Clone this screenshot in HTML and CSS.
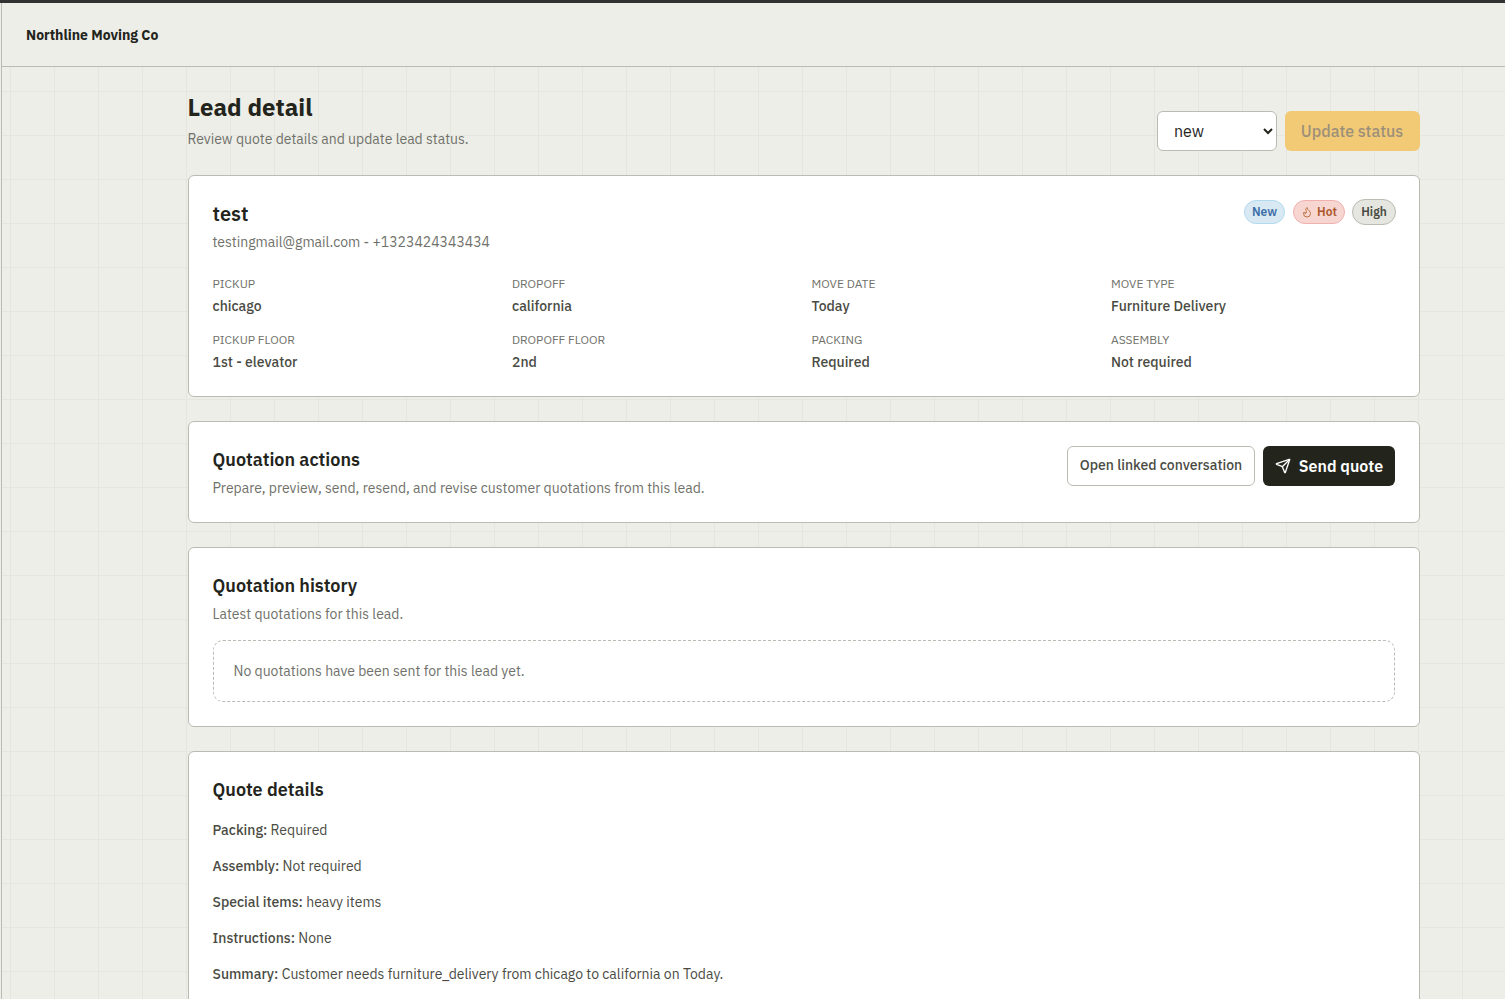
FILE: index.html
```
<!DOCTYPE html>
<html lang="en">
<head>
  <meta charset="UTF-8" />
  <meta name="viewport" content="width=device-width, initial-scale=1" />
  <title>Lead detail – Northline Moving Co</title>
  <link rel="stylesheet" href="styles.css">
</head>
<body>

  <div class="app">
    <header class="topbar">
      <span class="company">Northline Moving Co</span>
    </header>

    <main class="content">

      <div class="page-head">
        <div>
          <h1>Lead detail</h1>
          <p class="muted page-sub">Review quote details and update lead status.</p>
        </div>
        <form class="status-form">
          <select class="status-select" aria-label="Lead status">
            <option>new</option>
            <option>contacted</option>
            <option>quoted</option>
          </select>
          <button type="button" class="btn btn-update" disabled>Update status</button>
        </form>
      </div>

      <!-- lead summary -->
      <section class="card">
        <div class="card-head">
          <div>
            <h2 class="lead-name">test</h2>
            <p class="muted">testingmail@gmail.com - +1323424343434</p>
          </div>
          <div class="badges">
            <span class="badge badge-new">New</span>
            <span class="badge badge-hot">
              <svg class="badge-icon" viewBox="0 0 24 24"><path d="M8.5 14.5A2.5 2.5 0 0 0 11 12c0-1.38-.5-2-1-3-1.072-2.143-.224-4.054 2-6 .5 2.5 2 4.9 4 6.5 2 1.6 3 3.5 3 5.5a7 7 0 1 1-14 0c0-1.153.433-2.294 1-3a2.5 2.5 0 0 0 2.5 2.5z"/></svg>
              Hot
            </span>
            <span class="badge badge-high">High</span>
          </div>
        </div>

        <dl class="facts">
          <div><dt>Pickup</dt><dd>chicago</dd></div>
          <div><dt>Dropoff</dt><dd>california</dd></div>
          <div><dt>Move date</dt><dd>Today</dd></div>
          <div><dt>Move type</dt><dd>Furniture Delivery</dd></div>
          <div><dt>Pickup floor</dt><dd>1st - elevator</dd></div>
          <div><dt>Dropoff floor</dt><dd>2nd</dd></div>
          <div><dt>Packing</dt><dd>Required</dd></div>
          <div><dt>Assembly</dt><dd>Not required</dd></div>
        </dl>
      </section>

      <section class="card">
        <div class="card-head">
          <div>
            <h2>Quotation actions</h2>
            <p class="muted">Prepare, preview, send, resend, and revise customer quotations from this lead.</p>
          </div>
          <div class="actions">
            <button type="button" class="btn btn-outline">Open linked conversation</button>
            <button type="button" class="btn btn-dark">
              <svg class="btn-icon" viewBox="0 0 24 24"><path d="M14.536 21.686a.5.5 0 0 0 .937-.024l6.5-19a.496.496 0 0 0-.635-.635l-19 6.5a.5.5 0 0 0-.024.937l7.93 3.18a2 2 0 0 1 1.112 1.11z"/><path d="m21.854 2.147-10.94 10.939"/></svg>
              Send quote
            </button>
          </div>
        </div>
      </section>

      <section class="card">
        <h2>Quotation history</h2>
        <p class="muted">Latest quotations for this lead.</p>
        <div class="empty muted">No quotations have been sent for this lead yet.</div>
      </section>

      <section class="card">
        <h2>Quote details</h2>
        <div class="details">
          <p><strong>Packing:</strong> Required</p>
          <p><strong>Assembly:</strong> Not required</p>
          <p><strong>Special items:</strong> heavy items</p>
          <p><strong>Instructions:</strong> None</p>
          <p><strong>Summary:</strong> Customer needs furniture_delivery from chicago to california on Today.</p>
        </div>
      </section>

    </main>
  </div>

</body>
</html>
```
FILE: styles.css
```
* {
  box-sizing: border-box;
}

html {
  height: 100%;
  overflow: hidden;
}

body {
  height: 100%;
  overflow: hidden;
  margin: 0;
  padding-left: 1px;
  border-top: 3px solid #323232;
  background-color: #edeee8;
  color: #4a4b43;
  font-family: "IBM Plex Sans", Roboto, sans-serif;
  font-size: 14px;
  line-height: 20px;
}

h1,
h2,
p,
dl,
dd {
  margin: 0;
}

h1 {
  color: #23241c;
  font-size: 24px;
  line-height: 32px;
  font-weight: 700;
}

h2 {
  color: #23241c;
  font-size: 18px;
  line-height: 28px;
  font-weight: 600;
}

.muted {
  color: #70716a;
}

.app {
  min-height: 100%;
  border-left: 1px solid #babbb2;
  background-image:
    linear-gradient(to right, #e5e6df 1px, transparent 1px),
    linear-gradient(to bottom, #e5e6df 1px, transparent 1px);
  background-size: 44px 44px;
  background-position: 8px 0;
}

.topbar {
  display: flex;
  align-items: center;
  height: 64px;
  padding: 0 24px;
  border-bottom: 1px solid #babbb2;
  background-color: #edeee8;
}

.company {
  color: #23241c;
  font-weight: 700;
}

.content {
  display: flex;
  flex-direction: column;
  gap: 24px;
  width: 1232px;
  margin-left: 185.5px;
  padding-top: 24px;
}

.page-head {
  display: flex;
  justify-content: space-between;
  align-items: flex-end;
}

.page-sub {
  margin-top: 4px;
  line-height: 24px;
}

.status-form {
  display: flex;
  gap: 8px;
}

.status-select {
  width: 120px;
  height: 40px;
  padding: 0 0 0 12.5px;
  border: 1px solid #babbb2;
  border-radius: 6px;
  background-color: #fff;
  color: #23241c;
  font-family: inherit;
  font-size: 16px;
}

.btn {
  display: flex;
  align-items: center;
  justify-content: center;
  height: 40px;
  padding: 0;
  border: 1px solid transparent;
  border-radius: 6px;
  font-family: inherit;
  font-size: 16px;
  font-weight: 500;
}

.btn-update {
  width: 135px;
  background-color: #f2c975;
  color: #9c907a;
}

.btn-outline {
  width: 188px;
  padding: 0 0 2px 1px;
  border-color: #babbb2;
  background-color: #fff;
  color: #4a4b43;
  font-size: 14px;
}

.btn-dark {
  gap: 8px;
  width: 132px;
  padding-left: 1px;
  background-color: #23241c;
  color: #fff;
  font-weight: 600;
}

.btn-icon {
  width: 16px;
  height: 16px;
  fill: none;
  stroke: currentColor;
  stroke-width: 2;
  stroke-linecap: round;
  stroke-linejoin: round;
}

.card {
  padding: 24px;
  border: 1px solid #babbb2;
  border-radius: 6px;
  background-color: #fff;
}

.card h2 + .muted {
  margin-top: 4px;
}

.card-head {
  display: flex;
  justify-content: space-between;
  align-items: flex-start;
}

.card .lead-name {
  font-size: 20px;
}

.badges {
  display: flex;
  align-items: center;
  height: 24px;
}

.badge {
  display: flex;
  align-items: center;
  justify-content: center;
  height: 24px;
  padding-left: 1px;
  border: 1px solid;
  border-radius: 13px;
  font-size: 12px;
  line-height: 16px;
  font-weight: 600;
}

.badge-new {
  width: 41px;
  border-color: #b3daef;
  background-color: #d8e9f4;
  color: #3c6ea8;
}

.badge-hot {
  gap: 4px;
  width: 52px;
  margin-left: 8px;
  border-color: #f0b1ae;
  background-color: #f7d6d2;
  color: #ab562a;
}

.badge-icon {
  width: 12px;
  height: 12px;
  fill: none;
  stroke: #bd7440;
  stroke-width: 2;
  stroke-linecap: round;
  stroke-linejoin: round;
}

.badge-high {
  width: 44px;
  height: 26px;
  margin: 0 -1px 0 7px;
  border-color: #babbb2;
  background-color: #e5e6df;
  color: #4a4b43;
}

.facts {
  display: grid;
  grid-template-columns: repeat(4, 1fr);
  gap: 16px;
  margin-top: 24px;
}

.facts dt {
  color: #70716a;
  font-size: 12px;
  line-height: 16px;
  text-transform: uppercase;
}

.facts dd {
  margin-top: 4px;
  font-weight: 500;
}

.actions {
  display: flex;
  gap: 8px;
}

.empty {
  margin-top: 16px;
  padding: 20px;
  border: 1px dashed #babbb2;
  border-radius: 10px;
}

.details {
  display: flex;
  flex-direction: column;
  gap: 16px;
  margin-top: 16px;
}

.details strong {
  font-weight: 500;
}
```
